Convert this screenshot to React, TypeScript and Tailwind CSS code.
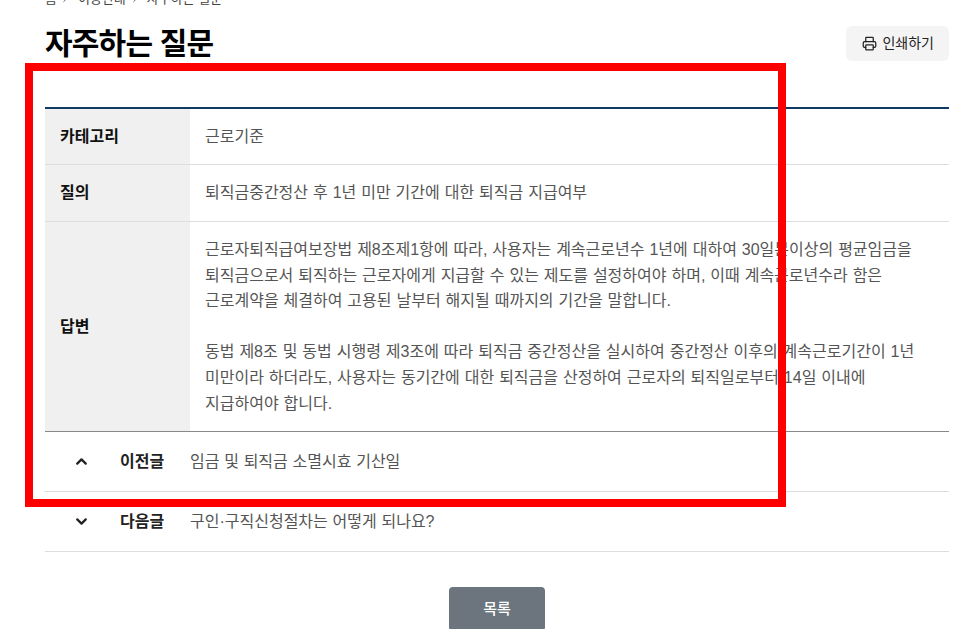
import React from "react"
import { ChevronDown, ChevronRight, ChevronUp, Printer } from "lucide-react"

const font = "font-['Liberation_Sans','Noto_Sans_CJK_KR',sans-serif]"

const answer = [
  "근로자퇴직급여보장법 제8조제1항에 따라, 사용자는 계속근로년수 1년에 대하여 30일분이상의 평균임금을",
  "퇴직금으로서 퇴직하는 근로자에게 지급할 수 있는 제도를 설정하여야 하며, 이때 계속근로년수라 함은",
  "근로계약을 체결하여 고용된 날부터 해지될 때까지의 기간을 말합니다.",
  "",
  "동법 제8조 및 동법 시행령 제3조에 따라 퇴직금 중간정산을 실시하여 중간정산 이후의 계속근로기간이 1년",
  "미만이라 하더라도, 사용자는 동기간에 대한 퇴직금을 산정하여 근로자의 퇴직일로부터 14일 이내에",
  "지급하여야 합니다.",
]

function Row({ label, children, border = "border-[#dddddd]" }: { label: string; children: React.ReactNode; border?: string }) {
  return (
    <div className={`flex border-b ${border}`}>
      <div className="w-[145px] shrink-0 bg-[#f0f0f0] px-[15px] flex items-center text-[16px] font-bold text-[#111111]">{label}</div>
      <div className="flex-1 min-w-0 px-[15px] text-[16px] text-[#555555] [word-spacing:0.5px]">{children}</div>
    </div>
  )
}

function NavRow({ dir, label, title }: { dir: "up" | "down"; label: string; title: string }) {
  return (
    <div className="flex items-center h-[60px] border-b border-[#dddddd] text-[16px]">
      <div className="w-[75px] flex justify-center shrink-0">
        {dir === "up" ? (
          <ChevronUp size={17} strokeWidth={3.2} className="text-[#222222] -ml-[3px]" />
        ) : (
          <ChevronDown size={17} strokeWidth={3.2} className="text-[#222222] -ml-[3px]" />
        )}
      </div>
      <div className="w-[70px] shrink-0 font-bold text-[#222222]">{label}</div>
      <div className="text-[#555555] [word-spacing:0.3px]">{title}</div>
    </div>
  )
}

export default function App() {
  return (
    <div className={`relative h-[629px] overflow-hidden bg-white pl-[45px] pr-[4px] ${font}`}>
      {/* breadcrumb, scrolled off the top */}
      <div className="-mt-[11px] flex items-center h-[20px] text-[13px] text-[#444444]">
        <span>홈</span>
        <ChevronRight size={10} strokeWidth={2} className="ml-[3px] mr-[8px]" />
        <span>이용안내</span>
        <ChevronRight size={10} strokeWidth={2} className="ml-[4px] mr-[7px]" />
        <span>자주하는 질문</span>
      </div>

      <div className="flex items-center justify-between mt-[12px] h-[44px]">
        <h1 className="text-[30px] font-bold text-black tracking-[-0.8px]">자주하는 질문</h1>
        <button className="flex items-center gap-[5px] h-[35px] mt-[1px] pl-[16px] pr-[15px] rounded-[6px] bg-[#f4f4f4] text-[14px] text-[#222222]">
          <Printer size={15} strokeWidth={2} />
          인쇄하기
        </button>
      </div>

      <div className="mt-[42px] border-t-2 border-[#0f3a63]">
        <Row label="카테고리">
          <div className="h-[55px] flex items-center">근로기준</div>
        </Row>
        <Row label="질의">
          <div className="h-[56px] flex items-center">퇴직금중간정산 후 1년 미만 기간에 대한 퇴직금 지급여부</div>
        </Row>
        <Row label="답변" border="border-[#888888]">
          <div className="py-[15px] leading-[25.6px]">
            {answer.map((line, i) => (
              <div key={i} className="h-[25.6px] whitespace-nowrap">{line}</div>
            ))}
          </div>
        </Row>
        <NavRow dir="up" label="이전글" title="임금 및 퇴직금 소멸시효 기산일" />
        <NavRow dir="down" label="다음글" title="구인·구직신청절차는 어떻게 되나요?" />
      </div>

      <div className="flex justify-center mt-[35px]">
        <button className="w-[96px] h-[44px] rounded-[4px] bg-[#6c757d] text-[15px] font-medium text-white">목록</button>
      </div>

      {/* red annotation box over the page */}
      <div className="absolute left-[25px] top-[63px] w-[761px] h-[444px] border-[8px] border-[#ff0000] pointer-events-none" />
    </div>
  )
}
